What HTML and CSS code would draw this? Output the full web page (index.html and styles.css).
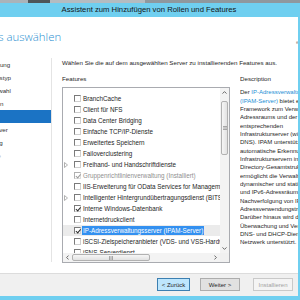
FILE: index.html
```html
<!DOCTYPE html>
<html lang="de">
<head>
<meta charset="utf-8">
<title>Assistent zum Hinzufügen von Rollen und Features</title>
<link rel="stylesheet" href="styles.css">
</head>
<body>
<div class="strip"></div>
<div class="window">
  <div class="titlebar">Assistent zum Hinzufügen von Rollen und Features</div>
  <div class="header">
    <h1 class="heading">Features auswählen</h1>
    <span class="target">ecosrv01</span>
  </div>
  <div class="main">
    <nav class="nav">
      <div class="nav-item">Vorbemerkung</div>
      <div class="nav-item">Installationstyp</div>
      <div class="nav-item">Serverauswahl</div>
      <div class="nav-item">Serverrollen</div>
      <div class="nav-item active">Features</div>
      <div class="nav-item">DHCP-Server</div>
      <div class="nav-item">Bestätigung</div>
      <div class="nav-item disabled">Ergebnisse</div>
    </nav>
    <div class="content">
      <p class="intro">Wählen Sie die auf dem ausgewählten Server zu installierenden Features aus.</p>
      <div class="columns">
        <div class="features">
          <div class="label">Features</div>
          <div class="listbox">
            <div class="rows">
              <div class="row"><span class="exp"></span><span class="cb"></span><span class="txt">BranchCache</span></div>
              <div class="row"><span class="exp"></span><span class="cb"></span><span class="txt">Client für NFS</span></div>
              <div class="row"><span class="exp"></span><span class="cb"></span><span class="txt">Data Center Bridging</span></div>
              <div class="row"><span class="exp"></span><span class="cb"></span><span class="txt">Einfache TCP/IP-Dienste</span></div>
              <div class="row"><span class="exp"></span><span class="cb"></span><span class="txt">Erweitertes Speichern</span></div>
              <div class="row"><span class="exp"></span><span class="cb"></span><span class="txt">Failoverclustering</span></div>
              <div class="row"><span class="exp"><svg width="4" height="6" viewBox="0 0 4 6"><path d="M0.5 0.5 L3.5 3 L0.5 5.5 Z" fill="none" stroke="#a8a8a8" stroke-width="0.9"/></svg></span><span class="cb"></span><span class="txt">Freihand- und Handschriftdienste</span></div>
              <div class="row grey"><span class="exp"></span><span class="cb on"></span><span class="txt">Gruppenrichtlinienverwaltung (Installiert)</span></div>
              <div class="row"><span class="exp"></span><span class="cb"></span><span class="txt">IIS-Erweiterung für OData Services for Management</span></div>
              <div class="row"><span class="exp"><svg width="4" height="6" viewBox="0 0 4 6"><path d="M0.5 0.5 L3.5 3 L0.5 5.5 Z" fill="none" stroke="#a8a8a8" stroke-width="0.9"/></svg></span><span class="cb"></span><span class="txt">Intelligenter Hintergrundübertragungsdienst (BITS)</span></div>
              <div class="row"><span class="exp"></span><span class="cb on"></span><span class="txt">Interne Windows-Datenbank</span></div>
              <div class="row"><span class="exp"></span><span class="cb"></span><span class="txt">Internetdruckclient</span></div>
              <div class="row sel"><span class="exp"></span><span class="cb on"></span><span class="txt">IP-Adressverwaltungsserver (IPAM-Server)</span></div>
              <div class="row"><span class="exp"></span><span class="cb"></span><span class="txt">iSCSI-Zielspeicheranbieter (VDS- und VSS-Hardwareanbieter)</span></div>
              <div class="row"><span class="exp"></span><span class="cb"></span><span class="txt">iSNS-Serverdienst</span></div>
            </div>
            <div class="vscroll">
              <div class="sb-btn"><svg width="5" height="3" viewBox="0 0 5 3"><path d="M0.5 2.6 L2.5 0.6 L4.5 2.6" fill="none" stroke="#5a5a5a" stroke-width="0.9"/></svg></div>
              <div class="vtrack">
                <div class="vthumb"><svg width="4" height="4" viewBox="0 0 4 4"><path d="M0 0.5 H4 M0 2 H4 M0 3.5 H4" stroke="#8a8a8a" stroke-width="0.7"/></svg></div>
              </div>
              <div class="sb-btn"><svg width="5" height="3" viewBox="0 0 5 3"><path d="M0.5 0.4 L2.5 2.4 L4.5 0.4" fill="none" stroke="#5a5a5a" stroke-width="0.9"/></svg></div>
            </div>
            <div class="hscroll">
              <div class="sb-btn"><svg width="3" height="5" viewBox="0 0 3 5"><path d="M2.6 0.5 L0.6 2.5 L2.6 4.5" fill="none" stroke="#5a5a5a" stroke-width="0.9"/></svg></div>
              <div class="htrack">
                <div class="hthumb"><svg width="4" height="4" viewBox="0 0 4 4"><path d="M0.5 0 V4 M2 0 V4 M3.5 0 V4" stroke="#8a8a8a" stroke-width="0.7"/></svg></div>
              </div>
              <div class="sb-btn"><svg width="3" height="5" viewBox="0 0 3 5"><path d="M0.4 0.5 L2.4 2.5 L0.4 4.5" fill="none" stroke="#5a5a5a" stroke-width="0.9"/></svg></div>
            </div>
            <div class="corner"></div>
          </div>
        </div>
        <div class="desc">
          <div class="label">Description</div>
          <div class="desc-text">
            <div>Der <span class="link">IP-Adressverwaltungsserver</span></div>
            <div><span class="link">(IPAM-Server)</span> bietet ein zentrales</div>
            <div>Framework zum Verwalten des IP-</div>
            <div>Adressraums und der</div>
            <div>entsprechenden</div>
            <div>Infrastrukturserver (wie DHCP und</div>
            <div>DNS). IPAM unterstützt die</div>
            <div>automatische Erkennung von</div>
            <div>Infrastrukturservern in einer Active</div>
            <div>Directory-Gesamtstruktur und</div>
            <div>ermöglicht die Verwaltung</div>
            <div>dynamischer und statischer IPv4-</div>
            <div>und IPv6-Adressräume, die</div>
            <div>Nachverfolgung von IP-</div>
            <div>Adressverwendungstrends sowie</div>
            <div>Darüber hinaus wird die</div>
            <div>Überwachung und Verwaltung von</div>
            <div>DNS- und DHCP-Diensten im</div>
            <div>Netzwerk unterstützt.</div>
          </div>
        </div>
      </div>
    </div>
  </div>
  <div class="footer">
    <div class="btn back">&lt; Zurück</div>
    <div class="btn next">Weiter &gt;</div>
    <div class="btn install">Installieren</div>
  </div>
</div>
</body>
</html>
```
FILE: styles.css
```css
html, body {
  margin: 0;
  padding: 0;
}
body {
  width: 300px;
  height: 300px;
  overflow: hidden;
  background: #ffffff;
  color: #1e1e1e;
  font-family: "Liberation Sans", Arial, sans-serif;
}
.strip {
  height: 3px;
  background: linear-gradient(to right, #aab3b9 0 28px, #4e5559 28px 50px, #b4bcc1 50px 145px, #8f989e 145px 300px);
}
.window {
  width: 300px;
  height: 297px;
  box-sizing: border-box;
  border-right: 2px solid #6fcff0;
  border-bottom: 4px solid #6fcff0;
  display: flex;
  flex-direction: column;
  background: #ffffff;
}
.titlebar {
  flex: none;
  height: 14px;
  line-height: 14px;
  background: #6fcff0;
  color: #151515;
  font-size: 7.7px;
  text-align: center;
  white-space: nowrap;
}
.header {
  flex: none;
  height: 35px;
  box-sizing: border-box;
  padding-top: 7px;
  display: flex;
  overflow: hidden;
}
.heading {
  flex: 1;
  margin: 0 0 0 -41px;
  font-family: "Open Sans", sans-serif;
  font-weight: 300;
  font-size: 11.4px;
  line-height: 26px;
  color: #2b8fd1;
  white-space: nowrap;
}
.target {
  flex: none;
  margin: 14px -24px 0 0;
  font-size: 6px;
  line-height: 8px;
  color: #8a8a8a;
  width: 26px;
  white-space: nowrap;
}
.main {
  flex: 1;
  min-height: 0;
  display: flex;
  overflow: hidden;
}
.nav {
  flex: none;
  width: 51px;
  margin: 6px 0 11px;
  border-right: 1px solid #e4e4e4;
  overflow: hidden;
}
.nav-item {
  height: 13px;
  line-height: 13px;
  font-size: 6.2px;
  color: #333333;
  white-space: nowrap;
  text-indent: -30px;
}
.nav-item.active {
  background: #1b73c4;
  color: #ffffff;
}
.nav-item.disabled {
  color: #b4b4b4;
}
.content {
  flex: 1;
  min-width: 0;
  padding-left: 10px;
  display: flex;
  flex-direction: column;
}
.intro {
  margin: 7px 0 0;
  font-size: 6.2px;
  line-height: 8px;
  white-space: nowrap;
}
.columns {
  flex: none;
  display: flex;
  gap: 10px;
  margin-top: 8px;
}
.features {
  flex: none;
  width: 168px;
}
.label {
  height: 8px;
  font-size: 6.2px;
  line-height: 8px;
  white-space: nowrap;
}
.listbox {
  margin-top: 4px;
  height: 176px;
  box-sizing: border-box;
  border: 1px solid #a9abb0;
  display: grid;
  grid-template-columns: 1fr 9px;
  grid-template-rows: 1fr 9px;
}
.rows {
  grid-column: 1;
  grid-row: 1;
  min-width: 0;
  overflow: hidden;
  padding-top: 5px;
}
.row {
  height: 11px;
  display: flex;
  align-items: center;
  font-size: 6.3px;
  white-space: nowrap;
}
.exp {
  flex: none;
  width: 10px;
  padding-left: 1px;
  display: flex;
  align-items: center;
}
.cb {
  flex: none;
  width: 7px;
  height: 7px;
  box-sizing: border-box;
  margin-right: 2px;
  border: 1px solid;
  border-color: #7a7a7a #cfcfcf #cfcfcf #7a7a7a;
  background: #ffffff;
  position: relative;
}
.cb.on::after {
  content: "";
  position: absolute;
  left: 1.5px;
  top: -0.5px;
  width: 1.5px;
  height: 3.5px;
  border-right: 1px solid #2a2a2a;
  border-bottom: 1px solid #2a2a2a;
  transform: rotate(40deg);
}
.row.grey .txt {
  color: #8f8f8f;
}
.row.grey .cb {
  border-color: #b0b0b0 #dddddd #dddddd #b0b0b0;
}
.row.grey .cb.on::after {
  border-color: #9a9a9a;
}
.row.sel {
  background: #ebebeb;
}
.row.sel .txt {
  background: #3390f0;
  color: #ffffff;
  padding: 0 1px;
  margin-left: -1px;
  line-height: 9px;
}
.vscroll {
  grid-column: 2;
  grid-row: 1;
  display: flex;
  flex-direction: column;
  background: #f3f3f3;
}
.sb-btn {
  flex: none;
  width: 9px;
  height: 9px;
  display: flex;
  align-items: center;
  justify-content: center;
}
.vtrack {
  flex: 1;
}
.vthumb {
  margin: 4px 1px 0;
  height: 54px;
  box-sizing: border-box;
  border: 1px solid #b1b1b1;
  border-radius: 2px;
  background: linear-gradient(to right, #f6f6f6, #e2e2e2);
  display: flex;
  align-items: center;
  justify-content: center;
}
.hscroll {
  grid-column: 1;
  grid-row: 2;
  display: flex;
  background: #f3f3f3;
}
.htrack {
  flex: 1;
}
.hthumb {
  margin: 1px 0;
  width: 78px;
  height: 7px;
  box-sizing: border-box;
  border: 1px solid #b1b1b1;
  border-radius: 2px;
  background: linear-gradient(#f6f6f6, #e2e2e2);
  display: flex;
  align-items: center;
  justify-content: center;
}
.corner {
  grid-column: 2;
  grid-row: 2;
  background: #f0f0f0;
}
.desc {
  flex: 1;
  min-width: 0;
  overflow: hidden;
}
.desc-text {
  margin-top: 5.3px;
  font-size: 6px;
  line-height: 8.33px;
  white-space: nowrap;
}
.link {
  color: #1e8fd5;
}
.footer {
  flex: none;
  height: 23px;
  box-sizing: border-box;
  border-top: 1px solid #dcdcdc;
  background: #f0f0f0;
  display: flex;
  justify-content: flex-end;
  align-items: flex-start;
  padding: 4px 5px 0 0;
}
.btn {
  height: 13px;
  box-sizing: border-box;
  border: 1px solid;
  font-size: 6px;
  display: flex;
  align-items: center;
  justify-content: center;
  white-space: nowrap;
}
.btn.back {
  width: 33px;
  margin-right: 10px;
  background: #bee6fd;
  border-color: #3c7fb1;
}
.btn.next {
  width: 40px;
  margin-right: 13px;
  background: #e1e1e1;
  border-color: #adadad;
}
.btn.install {
  width: 40px;
  background: #f4f4f4;
  border-color: #c9c9c9;
  color: #a3a3a3;
}
```
